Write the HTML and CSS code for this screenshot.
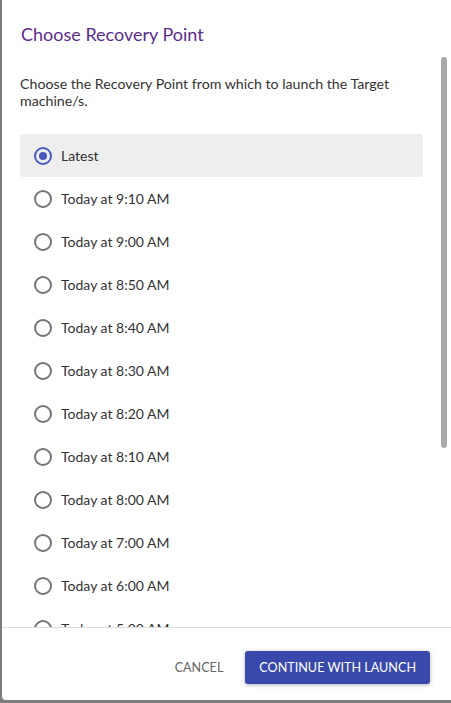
FILE: index.html
```html
<!DOCTYPE html>
<html lang="en">
<head>
<meta charset="utf-8">
<title>Choose Recovery Point</title>
<link rel="stylesheet" href="styles.css">
</head>
<body>
<div class="dialog">
  <header class="dialog-header">
    <h2 class="dialog-title">Choose Recovery Point</h2>
  </header>
  <div class="dialog-body">
    <p class="intro">Choose the Recovery Point from which to launch the Target machine/s.</p>
    <ul class="points">
      <li class="point selected"><span class="radio"></span><span class="label">Latest</span></li>
      <li class="point"><span class="radio"></span><span class="label">Today at 9:10 AM</span></li>
      <li class="point"><span class="radio"></span><span class="label">Today at 9:00 AM</span></li>
      <li class="point"><span class="radio"></span><span class="label">Today at 8:50 AM</span></li>
      <li class="point"><span class="radio"></span><span class="label">Today at 8:40 AM</span></li>
      <li class="point"><span class="radio"></span><span class="label">Today at 8:30 AM</span></li>
      <li class="point"><span class="radio"></span><span class="label">Today at 8:20 AM</span></li>
      <li class="point"><span class="radio"></span><span class="label">Today at 8:10 AM</span></li>
      <li class="point"><span class="radio"></span><span class="label">Today at 8:00 AM</span></li>
      <li class="point"><span class="radio"></span><span class="label">Today at 7:00 AM</span></li>
      <li class="point"><span class="radio"></span><span class="label">Today at 6:00 AM</span></li>
      <li class="point"><span class="radio"></span><span class="label">Today at 5:00 AM</span></li>
    </ul>
  </div>
  <div class="scroll-thumb"></div>
  <footer class="dialog-footer">
    <button class="btn btn-text">CANCEL</button>
    <button class="btn btn-primary">CONTINUE WITH LAUNCH</button>
  </footer>
</div>
</body>
</html>
```
FILE: styles.css
```css
html, body {
  margin: 0;
  padding: 0;
  height: 100%;
}
body {
  background: #7d7d7d;
  font-family: Lato, "Open Sans", Arial, sans-serif;
  overflow: hidden;
}
.dialog {
  position: relative;
  margin-left: 2px;
  width: 449px;
  height: 700px;
  background: #fff;
  border-bottom-left-radius: 4px;
  display: flex;
  flex-direction: column;
}
.dialog-header {
  height: 56px;
  padding: 22px 0 0 19px;
  box-sizing: border-box;
  flex: none;
}
.dialog-title {
  margin: 0;
  font-size: 18px;
  line-height: 24px;
  font-weight: 400;
  color: #5b2d8e;
}
.dialog-body {
  height: 571px;
  flex: none;
  overflow: hidden;
  padding: 19px 28px 25px 18px;
  box-sizing: border-box;
}
.scroll-thumb {
  position: absolute;
  left: 439px;
  top: 57px;
  width: 6px;
  height: 391px;
  border-radius: 3px;
  background: #a9a9a9;
}
.intro {
  margin: 0 0 25px 0;
  font-size: 14.2px;
  line-height: 17px;
  color: #333;
}
.points {
  list-style: none;
  margin: 0;
  padding: 0;
}
.point {
  height: 43px;
  display: flex;
  align-items: center;
  gap: 9px;
  padding-left: 14px;
  border-radius: 3px;
  font-size: 14px;
  color: #333;
}
.point.selected {
  background: #eeeeee;
}
.radio {
  width: 18px;
  height: 18px;
  box-sizing: border-box;
  border: 2px solid #757575;
  border-radius: 50%;
  flex: none;
  display: flex;
  align-items: center;
  justify-content: center;
}
.point.selected .radio {
  border-color: #4a59c0;
}
.point.selected .radio::after {
  content: "";
  width: 8px;
  height: 8px;
  border-radius: 50%;
  background: #4a59c0;
}
.dialog-footer {
  flex: none;
  border-top: 1px solid #dddddd;
  height: 73px;
  box-sizing: border-box;
  display: flex;
  justify-content: flex-end;
  align-items: flex-start;
  padding: 23px 21px 0 0;
  gap: 6px;
}
.btn {
  font-family: Lato, "Open Sans", Arial, sans-serif;
  font-size: 12.6px;
  height: 33px;
  border: none;
  border-radius: 3px;
  cursor: pointer;
  padding: 0 14px;
}
.btn-text {
  background: transparent;
  color: #666;
  padding: 0 16px;
}
.btn-primary {
  background: #3949ab;
  color: #fff;
  box-shadow: 0 1px 4px rgba(0,0,0,0.3);
}
```
